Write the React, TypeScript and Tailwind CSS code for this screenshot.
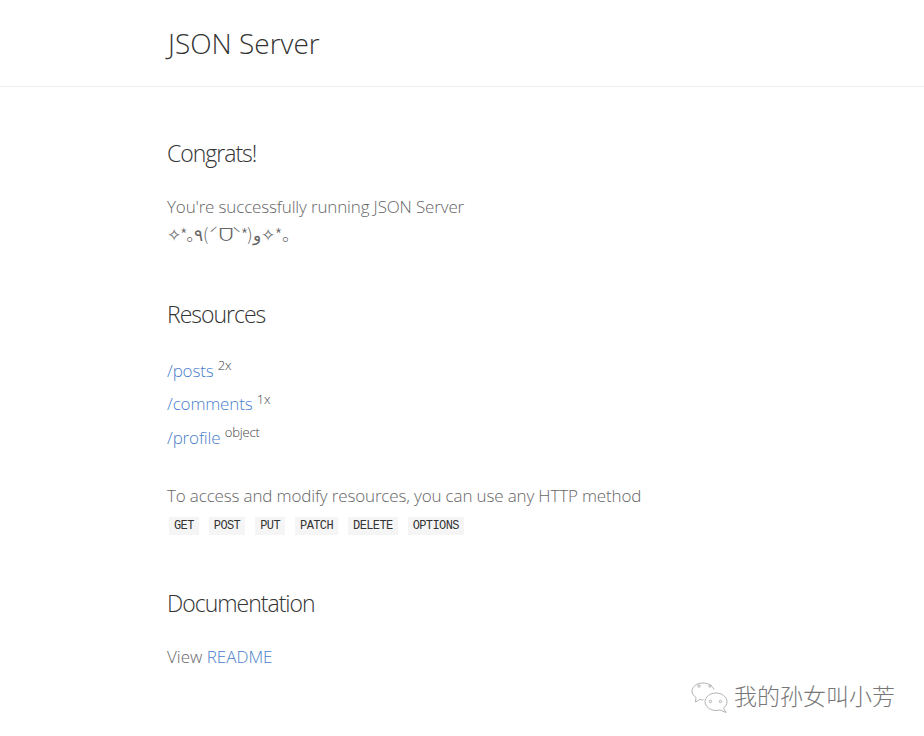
const methods = ["GET", "POST", "PUT", "PATCH", "DELETE", "OPTIONS"];

const resources = [
  { name: "/posts", count: "2x" },
  { name: "/comments", count: "1x" },
  { name: "/profile", count: "object" },
];

function WechatMark() {
  return (
    <svg width="40" height="34" viewBox="0 0 40 34" fill="none" stroke="#b4b4b4" strokeWidth="1">
      <path d="M24 10.500C22.500 6.500 18 4 13 4 7 4 2 7.500 2 12c0 2.700 1.600 4.900 4 6.400L5.500 23l4.300-2.600c1.300.3 2.400.4 3.700.4" />
      <path d="M33.500 29c2.200-1.500 3.500-3.700 3.500-6.300C37 18 32 14 26 14s-11 4-11 8.700 5 8.800 11 8.800c1.400 0 2.700-.2 3.900-.6L36 33.500z" />
      <circle cx="9" cy="7" r="1.200" />
      <circle cx="20" cy="7" r="1.200" />
      <circle cx="20.500" cy="22.500" r="1.200" />
      <circle cx="30.500" cy="22.500" r="1.200" />
    </svg>
  );
}

export default function App() {
  return (
    <div className="relative min-h-[736px] bg-white font-['Open_Sans','Noto_Sans_CJK_SC',sans-serif] font-light text-[#444]">
      <header className="h-[87px] border-b border-[#eee] pl-[168px] pt-[23px]">
        <h1 className="text-[28px] leading-[40px] font-light text-[#333]">JSON Server</h1>
      </header>

      <main className="pl-[167px]">
        <section className="pt-[49px]">
          <h2 className="text-[23px] leading-[34px] tracking-[-1px] font-light text-[#333]">Congrats!</h2>
          <div className="mt-[22px] text-[17px] tracking-[-0.15px] text-[#666]">
            <p className="h-[29px] leading-[29px]">You're successfully running JSON Server</p>
            <p className="h-[29px] leading-[25px] tracking-[-1px] font-['Noto_Sans_CJK_SC','DejaVu_Sans',sans-serif]">
              ✧*｡٩(ˊᗜˋ*)و✧*｡
            </p>
          </div>
        </section>

        <section className="pt-[47px]">
          <h2 className="text-[23px] leading-[34px] tracking-[-1px] font-light text-[#333]">Resources</h2>
          <ul className="mt-[24.75px] text-[17px] tracking-[-0.15px]">
            {resources.map((r) => (
              <li key={r.name} className="h-[33.5px] leading-[29px]">
                <a className="text-[#4a80cc]">{r.name}</a>{" "}
                <sup className="text-[13px] text-[#444]">{r.count}</sup>
              </li>
            ))}
          </ul>
          <p className="mt-[25px] text-[17px] leading-[29px] tracking-[-0.15px] text-[#666]">
            To access and modify resources, you can use any HTTP method
          </p>
          <div className="mt-[7px] ml-[2px] flex gap-[10px]">
            {methods.map((m) => (
              <code
                key={m}
                className="bg-[#f5f5f5] px-[5px] text-[12px] leading-[18px] tracking-[-0.6px] font-normal text-[#333] font-['Liberation_Mono',monospace]"
              >
                {m}
              </code>
            ))}
          </div>
        </section>

        <section className="pt-[51px]">
          <h2 className="text-[23px] leading-[34px] tracking-[-1px] font-light text-[#333]">Documentation</h2>
          <p className="mt-[22px] text-[17px] leading-[29px] text-[#666]">
            View <a className="text-[#4a80cc]">README</a>
          </p>
        </section>
      </main>

      <div className="absolute left-[690px] top-[679px] flex items-center gap-[4px]">
        <WechatMark />
        <span className="text-[23px] leading-[32px] font-light text-[#777] [text-shadow:0_0_2px_#fff]">
          我的孙女叫小芳
        </span>
      </div>
    </div>
  );
}
